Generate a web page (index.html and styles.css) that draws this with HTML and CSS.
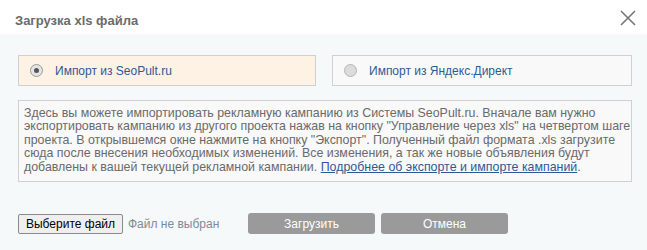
FILE: index.html
```html
<!DOCTYPE html>
<html lang="ru">
<head>
  <meta charset="UTF-8">
  <title>Загрузка xls файла</title>
  <link rel="stylesheet" href="styles.css">
</head>
<body>
  <div class="dialog">
    <div class="dialog-header">
      <div class="dialog-title">Загрузка xls файла</div>
      <div class="dialog-close">
        <svg width="16" height="16" viewBox="0 0 16 16">
          <path d="M1 1 L15 15 M15 1 L1 15" stroke="#777" stroke-width="1.6" fill="none"/>
        </svg>
      </div>
    </div>

    <div class="dialog-body">
      <div class="source-row">
        <label class="source source-active">
          <span class="radio radio-checked"></span>
          <span class="source-label">Импорт из SeoPult.ru</span>
        </label>
        <label class="source">
          <span class="radio"></span>
          <span class="source-label">Импорт из Яндекс.Директ</span>
        </label>
      </div>

      <div class="info">
        Здесь вы можете импортировать рекламную кампанию из Системы SeoPult.ru. Вначале вам нужно<br>
        экспортировать кампанию из другого проекта нажав на кнопку "Управление через xls" на четвертом шаге<br>
        проекта. В открывшемся окне нажмите на кнопку "Экспорт". Полученный файл формата .xls загрузите<br>
        сюда после внесения необходимых изменений. Все изменения, а так же новые объявления будут<br>
        добавлены к вашей текущей рекламной кампании. <a href="#">Подробнее об экспорте и импорте кампаний</a>.
      </div>

      <div class="actions">
        <div class="file-picker">
          <button class="file-button">Выберите файл</button>
          <span class="file-name">Файл не выбран</span>
        </div>
        <button class="btn">Загрузить</button>
        <button class="btn">Отмена</button>
      </div>
    </div>
  </div>
</body>
</html>
```

FILE: styles.css
```css
body {
  margin: 0;
  font-family: "Liberation Sans", Arial, sans-serif;
  background: #f5f9fa;
}

.dialog {
  width: 647px;
  height: 250px;
}

/* Шапка */
.dialog-header {
  height: 34px;
  background: #fff;
  display: flex;
  align-items: center;
  justify-content: space-between;
  padding: 0 11px 0 15px;
}

.dialog-title {
  font-size: 13px;
  font-weight: bold;
  color: #6b6b6b;
  padding-top: 6px;
}

.dialog-close {
  width: 16px;
  height: 16px;
  margin-top: 1px;
}

.dialog-close svg {
  display: block;
}

.dialog-body {
  padding: 21px 15px 0 18px;
}

/* Выбор источника */
.source-row {
  display: grid;
  grid-template-columns: 298px 300px;
  gap: 16px;
}

.source {
  height: 29px;
  border: 1px solid #d0d0d0;
  background: #f9f9f9;
  display: flex;
  align-items: center;
  padding-left: 11px;
}

.source-active {
  background: #fdf2e3;
}

.source-label {
  font-size: 12px;
  color: #2d5a96;
  margin-left: 12px;
}

.radio {
  width: 11px;
  height: 11px;
  border-radius: 50%;
  border: 1px solid #b5b5b5;
  background: #dcdcdc;
  position: relative;
}

.radio-checked {
  background: #e4e4e4;
  border-color: #9a9a9a;
}

.radio-checked::after {
  content: "";
  position: absolute;
  left: 3px;
  top: 3px;
  width: 5px;
  height: 5px;
  border-radius: 50%;
  background: #555;
}

/* Описание */
.info {
  margin-top: 14px;
  height: 68px;
  border: 1px solid #d0d0d0;
  background: #f9f9f9;
  padding: 6px 5px;
  font-size: 12.4px;
  line-height: 13.4px;
  color: #6a6a6a;
  white-space: nowrap;
}

.info a {
  color: #2d5a96;
}

/* Кнопки */
.actions {
  margin-top: 31px;
  display: flex;
  align-items: center;
}

.file-picker {
  display: flex;
  align-items: center;
  width: 230px;
}

.file-button {
  height: 20px;
  width: 105px;
  padding: 0;
  font-family: "Liberation Sans", Arial, sans-serif;
  font-size: 12px;
  color: #000;
  background: #efefef;
  border: 1px solid #8a8a8a;
  border-radius: 2px;
}

.file-name {
  margin-left: 5px;
  font-size: 12px;
  color: #808a94;
}

.btn {
  width: 127px;
  height: 21px;
  margin-right: 6px;
  padding: 0;
  border: none;
  border-radius: 3px;
  background: #9a9a9a;
  color: #fff;
  font-family: "Liberation Sans", Arial, sans-serif;
  font-size: 12px;
}
```
